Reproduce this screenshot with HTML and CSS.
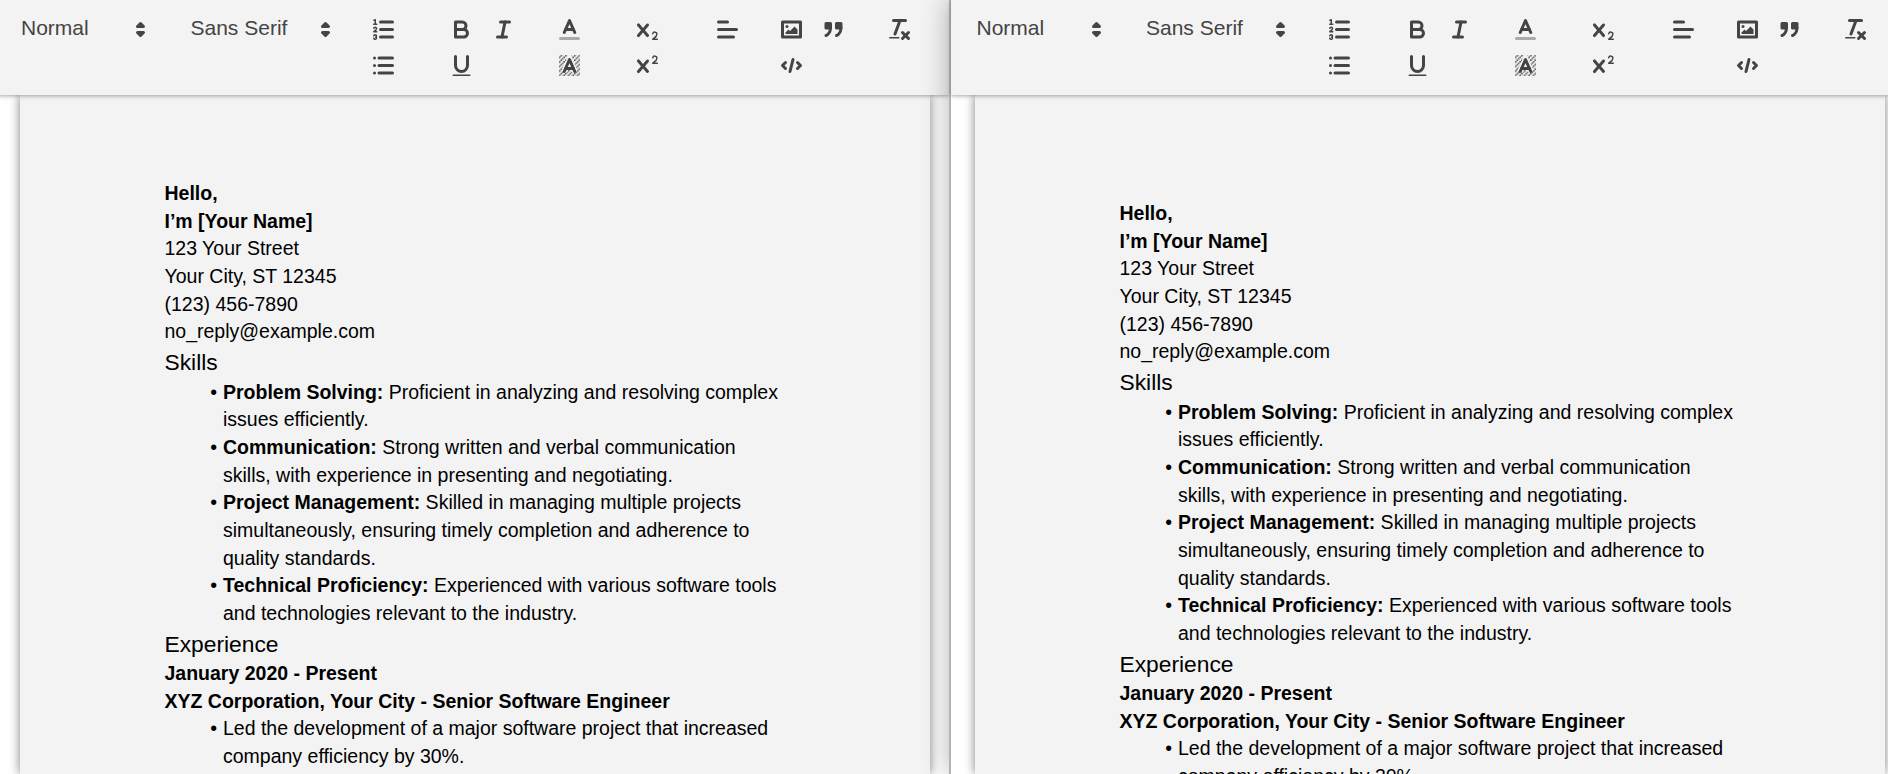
FILE: index.html
```html
<!DOCTYPE html>
<html lang="en">
<head>
    <meta charset="UTF-8">
    <meta name="viewport" content="width=device-width, initial-scale=1.0">
    <title>Resume editor</title>
    <link rel="stylesheet" href="styles.css">
</head>
<body>
    <svg class="icon-defs" width="0" height="0">
        <defs>
            <pattern id="hatch" width="3" height="3" patternUnits="userSpaceOnUse">
                <rect x="2" y="0" width="1" height="1" class="fill"></rect>
                <rect x="1" y="1" width="1" height="1" class="fill"></rect>
                <rect x="0" y="2" width="1" height="1" class="fill"></rect>
            </pattern>
            <symbol id="i-updown" viewBox="0 0 18 18">
                <polygon class="stroke fill" points="7 11 9 13 11 11 7 11"></polygon>
                <polygon class="stroke fill" points="7 7 9 5 11 7 7 7"></polygon>
            </symbol>
            <symbol id="i-ordered" viewBox="0 0 18 18">
                <line class="stroke" x1="7" x2="15" y1="4" y2="4"></line>
                <line class="stroke" x1="7" x2="15" y1="9" y2="9"></line>
                <line class="stroke" x1="7" x2="15" y1="14" y2="14"></line>
                <line class="stroke thin" x1="2.5" x2="4.5" y1="5.5" y2="5.5"></line>
                <path class="fill" d="M3.5,6A0.5,0.5,0,0,1,3,5.5V3.085l-0.276.138A0.5,0.5,0,0,1,2.053,3c-0.124-.247-0.023-0.324.224-0.447l1-.5A0.5,0.5,0,0,1,4,2.5v3A0.5,0.5,0,0,1,3.5,6Z"></path>
                <path class="stroke thin" d="M4.5,10.5h-2c0-.234,1.85-1.076,1.85-2.234A0.959,0.959,0,0,0,2.5,8.156"></path>
                <path class="stroke thin" d="M2.5,14.846a0.959,0.959,0,0,0,1.85-.109A0.7,0.7,0,0,0,3.75,14a0.688,0.688,0,0,0,.6-0.736,0.959,0.959,0,0,0-1.85-.109"></path>
            </symbol>
            <symbol id="i-bullet" viewBox="0 0 18 18">
                <line class="stroke" x1="6" x2="15" y1="4" y2="4"></line>
                <line class="stroke" x1="6" x2="15" y1="9" y2="9"></line>
                <line class="stroke" x1="6" x2="15" y1="14" y2="14"></line>
                <line class="stroke" x1="3" x2="3" y1="4" y2="4"></line>
                <line class="stroke" x1="3" x2="3" y1="9" y2="9"></line>
                <line class="stroke" x1="3" x2="3" y1="14" y2="14"></line>
            </symbol>
            <symbol id="i-bold" viewBox="0 0 18 18">
                <path class="stroke" d="M5,4H9.5A2.5,2.5,0,0,1,12,6.5v0A2.5,2.5,0,0,1,9.5,9H5A0,0,0,0,1,5,9V4A0,0,0,0,1,5,4Z"></path>
                <path class="stroke" d="M5,9h5.5A2.5,2.5,0,0,1,13,11.5v0A2.5,2.5,0,0,1,10.5,14H5a0,0,0,0,1,0,0V9A0,0,0,0,1,5,9Z"></path>
            </symbol>
            <symbol id="i-italic" viewBox="0 0 18 18">
                <line class="stroke" x1="7" x2="13" y1="4" y2="4"></line>
                <line class="stroke" x1="5" x2="11" y1="14" y2="14"></line>
                <line class="stroke" x1="8" x2="10" y1="14" y2="4"></line>
            </symbol>
            <symbol id="i-underline" viewBox="0 0 18 18">
                <path class="stroke" d="M5,3V9a4.012,4.012,0,0,0,4,4H9a4.012,4.012,0,0,0,4-4V3"></path>
                <rect class="fill" height="1" rx="0.5" ry="0.5" width="12" x="3" y="15"></rect>
            </symbol>
            <symbol id="i-color" viewBox="0 0 18 18">
                <line class="stroke label" x1="3" x2="15" y1="15" y2="15"></line>
                <polyline class="stroke" points="5.5 11 9 3 12.5 11"></polyline>
                <line class="stroke" x1="11.63" x2="6.38" y1="9" y2="9"></line>
            </symbol>
            <symbol id="i-background" viewBox="0 0 18 18">
                <rect x="2" y="2" width="14" height="14" fill="url(#hatch)"></rect>
                <polyline class="halo" points="5.5 13 9 5 12.5 13"></polyline>
                <polyline class="stroke" points="5.5 13 9 5 12.5 13"></polyline>
                <line class="stroke" x1="11.63" x2="6.38" y1="11" y2="11"></line>
            </symbol>
            <symbol id="i-sub" viewBox="0 0 18 18">
                <path class="fill" d="M15.5,15H13.861a3.858,3.858,0,0,0,1.914-2.975,1.8,1.8,0,0,0-1.6-1.751A1.921,1.921,0,0,0,12.021,11.7a0.50013,0.50013,0,1,0,.957.291h0a0.914,0.914,0,0,1,1.053-.725,0.81,0.81,0,0,1,.744.762c0,1.076-1.16971,1.86982-1.93971,2.43082A1.45639,1.45639,0,0,0,12,15.5a0.5,0.5,0,0,0,.5.5h3A0.5,0.5,0,0,0,15.5,15Z"></path>
                <path class="fill" d="M9.65,5.241a1,1,0,0,0-1.409.108L6,7.964,3.759,5.349A1,1,0,0,0,2.192,6.59178Q2.21541,6.6213,2.241,6.649L4.684,9.5,2.241,12.35A1,1,0,0,0,3.71,13.70722q0.02557-.02768.049-0.05722L6,11.036,8.241,13.65a1,1,0,1,0,1.567-1.24277Q9.78459,12.3777,9.759,12.35L7.316,9.5,9.759,6.651A1,1,0,0,0,9.65,5.241Z"></path>
            </symbol>
            <symbol id="i-super" viewBox="0 0 18 18">
                <path class="fill" d="M15.5,7H13.861a4.015,4.015,0,0,0,1.914-2.975,1.8,1.8,0,0,0-1.6-1.751A1.922,1.922,0,0,0,12.021,3.7a0.5,0.5,0,1,0,.957.291,0.917,0.917,0,0,1,1.053-.725,0.81,0.81,0,0,1,.744.762c0,1.077-1.164,1.925-1.934,2.486A1.423,1.423,0,0,0,12,7.5a0.5,0.5,0,0,0,.5.5h3A0.5,0.5,0,0,0,15.5,7Z"></path>
                <path class="fill" d="M9.651,5.241a1,1,0,0,0-1.41.108L6,7.964,3.759,5.349a1,1,0,1,0-1.519,1.3L4.683,9.5,2.241,12.35a1,1,0,1,0,1.519,1.3L6,11.036,8.241,13.65a1,1,0,0,0,1.519-1.3L7.317,9.5,9.759,6.651A1,1,0,0,0,9.651,5.241Z"></path>
            </symbol>
            <symbol id="i-align" viewBox="0 0 18 18">
                <line class="stroke" x1="3" x2="15" y1="9" y2="9"></line>
                <line class="stroke" x1="3" x2="13" y1="14" y2="14"></line>
                <line class="stroke" x1="3" x2="9" y1="4" y2="4"></line>
            </symbol>
            <symbol id="i-image" viewBox="0 0 18 18">
                <rect class="stroke" height="10" width="12" x="3" y="4"></rect>
                <circle class="fill" cx="6" cy="7" r="1"></circle>
                <polyline class="fill" points="5 12 5 11 7 9 8 10 11 7 13 9 13 12 5 12"></polyline>
            </symbol>
            <symbol id="i-quote" viewBox="0 0 18 18">
                <rect class="fill stroke" height="3" width="3" x="4" y="5"></rect>
                <rect class="fill stroke" height="3" width="3" x="11" y="5"></rect>
                <path class="stroke" d="M7,8c0,4.031-3,5-3,5"></path>
                <path class="stroke" d="M14,8c0,4.031-3,5-3,5"></path>
            </symbol>
            <symbol id="i-code" viewBox="0 0 18 18">
                <polyline class="stroke" points="5 7 3 9 5 11"></polyline>
                <polyline class="stroke" points="13 7 15 9 13 11"></polyline>
                <line class="stroke" x1="10" x2="8" y1="5" y2="13"></line>
            </symbol>
            <symbol id="i-clean" viewBox="0 0 18 18">
                <line class="stroke" x1="5" x2="13" y1="3" y2="3"></line>
                <line class="stroke" x1="6" x2="9.35" y1="12" y2="3"></line>
                <line class="stroke" x1="11" x2="15" y1="11" y2="15"></line>
                <line class="stroke" x1="15" x2="11" y1="11" y2="15"></line>
                <rect class="fill" height="1" rx="0.5" ry="0.5" width="7" x="2" y="14"></rect>
            </symbol>
        </defs>
    </svg>

    <div class="split">
        <section class="pane pane-left">
            <div class="toolbar">
                <div class="picker picker-size"><span>Normal</span><svg class="arrows"><use href="#i-updown"></use></svg></div>
                <div class="picker picker-font"><span>Sans Serif</span><svg class="arrows"><use href="#i-updown"></use></svg></div>
                <div class="formats one gap-lists">
                    <button><svg><use href="#i-ordered"></use></svg></button>
                    <button><svg><use href="#i-bullet"></use></svg></button>
                </div>
                <div class="formats two">
                    <button><svg><use href="#i-bold"></use></svg></button>
                    <button><svg><use href="#i-italic"></use></svg></button>
                    <button><svg><use href="#i-underline"></use></svg></button>
                </div>
                <div class="formats one gap-lists">
                    <button><svg><use href="#i-color"></use></svg></button>
                    <button><svg><use href="#i-background"></use></svg></button>
                </div>
                <div class="formats one gap-script">
                    <button><svg><use href="#i-sub"></use></svg></button>
                    <button><svg><use href="#i-super"></use></svg></button>
                </div>
                <div class="formats one gap-align">
                    <button><svg><use href="#i-align"></use></svg></button>
                </div>
                <div class="formats two">
                    <button><svg><use href="#i-image"></use></svg></button>
                    <button><svg><use href="#i-quote"></use></svg></button>
                    <button><svg><use href="#i-code"></use></svg></button>
                </div>
                <div class="formats one">
                    <button><svg><use href="#i-clean"></use></svg></button>
                </div>
            </div>
            <div class="page">
                <p><strong>Hello,</strong></p>
                <p><strong>I’m [Your Name]</strong></p>
                <p>123 Your Street</p>
                <p>Your City, ST 12345</p>
                <p>(123) 456-7890</p>
                <p>no_reply@example.com</p>
                <h3>Skills</h3>
                <ul>
                    <li><strong>Problem Solving:</strong> Proficient in analyzing and resolving complex issues efficiently.</li>
                    <li><strong>Communication:</strong> Strong written and verbal communication skills, with experience in presenting and negotiating.</li>
                    <li><strong>Project Management:</strong> Skilled in managing multiple projects simultaneously, ensuring timely completion and adherence to quality standards.</li>
                    <li><strong>Technical Proficiency:</strong> Experienced with various software tools and technologies relevant to the industry.</li>
                </ul>
                <h3>Experience</h3>
                <p><strong>January 2020 - Present</strong></p>
                <p><strong>XYZ Corporation, Your City - Senior Software Engineer</strong></p>
                <ul>
                    <li>Led the development of a major software project that increased company efficiency by 30%.</li>
                </ul>
            </div>
        </section>

        <section class="pane pane-right">
            <div class="toolbar">
                <div class="picker picker-size"><span>Normal</span><svg class="arrows"><use href="#i-updown"></use></svg></div>
                <div class="picker picker-font"><span>Sans Serif</span><svg class="arrows"><use href="#i-updown"></use></svg></div>
                <div class="formats one gap-lists">
                    <button><svg><use href="#i-ordered"></use></svg></button>
                    <button><svg><use href="#i-bullet"></use></svg></button>
                </div>
                <div class="formats two">
                    <button><svg><use href="#i-bold"></use></svg></button>
                    <button><svg><use href="#i-italic"></use></svg></button>
                    <button><svg><use href="#i-underline"></use></svg></button>
                </div>
                <div class="formats one gap-lists">
                    <button><svg><use href="#i-color"></use></svg></button>
                    <button><svg><use href="#i-background"></use></svg></button>
                </div>
                <div class="formats one gap-script">
                    <button><svg><use href="#i-sub"></use></svg></button>
                    <button><svg><use href="#i-super"></use></svg></button>
                </div>
                <div class="formats one gap-align">
                    <button><svg><use href="#i-align"></use></svg></button>
                </div>
                <div class="formats two">
                    <button><svg><use href="#i-image"></use></svg></button>
                    <button><svg><use href="#i-quote"></use></svg></button>
                    <button><svg><use href="#i-code"></use></svg></button>
                </div>
                <div class="formats one">
                    <button><svg><use href="#i-clean"></use></svg></button>
                </div>
            </div>
            <div class="page">
                <p><strong>Hello,</strong></p>
                <p><strong>I’m [Your Name]</strong></p>
                <p>123 Your Street</p>
                <p>Your City, ST 12345</p>
                <p>(123) 456-7890</p>
                <p>no_reply@example.com</p>
                <h3>Skills</h3>
                <ul>
                    <li><strong>Problem Solving:</strong> Proficient in analyzing and resolving complex issues efficiently.</li>
                    <li><strong>Communication:</strong> Strong written and verbal communication skills, with experience in presenting and negotiating.</li>
                    <li><strong>Project Management:</strong> Skilled in managing multiple projects simultaneously, ensuring timely completion and adherence to quality standards.</li>
                    <li><strong>Technical Proficiency:</strong> Experienced with various software tools and technologies relevant to the industry.</li>
                </ul>
                <h3>Experience</h3>
                <p><strong>January 2020 - Present</strong></p>
                <p><strong>XYZ Corporation, Your City - Senior Software Engineer</strong></p>
                <ul>
                    <li>Led the development of a major software project that increased company efficiency by 30%.</li>
                </ul>
            </div>
        </section>
    </div>
</body>
</html>
```

FILE: styles.css
```css
html, body {
    height: 100%;
    margin: 0;
    overflow: hidden;
    background-color: #fff;
    font-family: "Liberation Sans", Arial, sans-serif;
}
.icon-defs {
    display: block;
    height: 0;
}
.split {
    display: flex;
    height: 100%;
}
.pane {
    position: relative;
    overflow: hidden;
    display: flex;
    flex-direction: column;
}
.pane-left {
    width: 952px;
    margin-left: -3px;
    flex: none;
}
.pane-right {
    flex: 1;
    min-width: 0;
    z-index: 2;
    border-left: 2px solid #b3b3b3;
    box-shadow: 0 0 25px rgba(0, 0, 0, 0.3);
    overflow: visible;
    background: #fff;
}

/* toolbar */
.toolbar {
    position: relative;
    z-index: 1;
    flex: none;
    display: flex;
    align-items: flex-start;
    box-sizing: border-box;
    height: 95px;
    padding: 11px 12px;
    background-color: #f3f3f3;
    box-shadow: 0 1px 4px rgba(0, 0, 0, 0.35);
}
.pane-right .toolbar {
    padding-left: 13.5px;
}
.picker {
    display: flex;
    align-items: center;
    justify-content: space-between;
    box-sizing: border-box;
    height: 36px;
    margin-right: 22.5px;
    padding-left: 12px;
    padding-right: 2px;
    flex: none;
    color: #444;
    font-size: 21px;
}
.picker span {
    margin-bottom: 3px;
}
.picker-size {
    width: 147px;
}
.picker-font {
    width: 162px;
    margin-right: 22px;
}
.arrows {
    width: 27px;
    height: 27px;
}
.formats {
    display: flex;
    flex-wrap: wrap;
    flex: none;
    margin-right: 24px;
}
.formats.one {
    width: 42px;
}
.formats.two {
    width: 84px;
}
.formats.gap-lists {
    margin-right: 36px;
}
.formats.gap-script {
    margin-right: 38px;
}
.formats.gap-align {
    margin-right: 22px;
}
button {
    display: block;
    width: 42px;
    height: 36px;
    padding: 4.5px 7.5px;
    border: none;
    background: none;
}
button svg {
    display: block;
    width: 27px;
    height: 27px;
}
.stroke {
    fill: none;
    stroke: #444;
    stroke-width: 2;
    stroke-linecap: round;
    stroke-linejoin: round;
}
.stroke.thin {
    stroke-width: 1;
}
.stroke.label {
    stroke: #aaa;
}
.halo {
    fill: none;
    stroke: #f3f3f3;
    stroke-width: 4;
}
.fill {
    fill: #444;
}
.fill.stroke {
    fill: #444;
}

/* document */
.page {
    flex: 1;
    box-sizing: border-box;
    width: 910px;
    min-height: 0;
    margin-left: 23px;
    overflow: hidden;
    color: #000;
    background-color: #f3f3f3;
    font-size: 19.5px;
    line-height: 1.42;
    box-shadow: 0 0 10px rgba(0, 0, 0, 0.5);
}
.pane-left .page {
    padding: 85px 145.5px 0 144.5px;
}
.pane-right .page {
    margin-left: 24px;
    padding: 105px 145.5px 0 144.5px;
}
.page p {
    margin: 0;
}
.page h3 {
    margin: 0;
    font-size: 1.17em;
    font-weight: 400;
}
.page ul {
    margin: 0;
    padding: 0 0 0 1.5em;
    list-style: none;
}
.page li {
    padding-left: 1.5em;
}
.page li::before {
    content: '\2022';
    display: inline-block;
    width: 1.2em;
    margin-left: -1.5em;
    margin-right: 0.3em;
    text-align: right;
    white-space: nowrap;
}
```
